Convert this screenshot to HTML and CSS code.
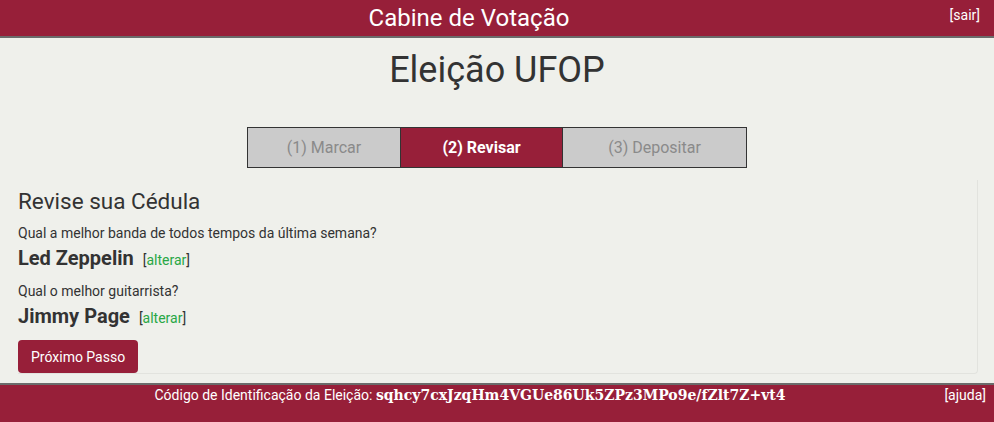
FILE: index.html
```html
<!DOCTYPE html>
<html lang="pt-BR">
<head>
<meta charset="utf-8">
<title>Cabine de Votação</title>
<link rel="stylesheet" href="styles.css">
</head>
<body>
<header class="topbar">
  <div class="topbar-title">Cabine de Votação</div>
  <a class="topbar-link" href="#">[sair]</a>
</header>
<main class="main">
  <h1 class="election-title">Eleição UFOP</h1>
  <div class="steps">
    <div class="step step-1">(1) Marcar</div>
    <div class="step step-2 active">(2) Revisar</div>
    <div class="step step-3">(3) Depositar</div>
  </div>
  <section class="panel">
    <h2 class="panel-title">Revise sua Cédula</h2>
    <div class="question">
      <div class="q-text">Qual a melhor banda de todos tempos da última semana?</div>
      <div class="q-answer"><span class="answer">Led Zeppelin</span><span class="alter">[<a href="#">alterar</a>]</span></div>
    </div>
    <div class="question">
      <div class="q-text">Qual o melhor guitarrista?</div>
      <div class="q-answer"><span class="answer">Jimmy Page</span><span class="alter">[<a href="#">alterar</a>]</span></div>
    </div>
    <button class="btn">Próximo Passo</button>
  </section>
</main>
<footer class="footer">
  <div class="footer-text">Código de Identificação da Eleição: <span class="code">sqhcy7cxJzqHm4VGUe86Uk5ZPz3MPo9e/fZlt7Z+vt4</span></div>
  <a class="footer-link" href="#">[ajuda]</a>
</footer>
</body>
</html>
```
FILE: styles.css
```css
* { box-sizing: border-box; }
html, body {
  margin: 0;
  padding: 0;
  height: 100%;
}
body {
  background: #eff0eb;
  font-family: Roboto, "Liberation Sans", sans-serif;
  color: #333;
  font-size: 14px;
  display: flex;
  flex-direction: column;
}
.topbar {
  position: relative;
  flex-shrink: 0;
  background: #971f39;
  height: 38px;
  border-bottom: 2px solid #6b6b6b;
  display: flex;
  justify-content: center;
  align-items: center;
  padding-right: 56px;
}
.topbar-title {
  color: #fff;
  font-size: 24px;
  line-height: 36px;
}
.topbar-link {
  position: absolute;
  right: 14px;
  top: 7px;
  color: #fff;
  text-decoration: none;
  font-size: 14px;
}
.main {
  flex: 1;
  padding: 0 18px 8px 18px;
}
.election-title {
  margin: 9px 0 0 0;
  text-align: center;
  font-size: 36px;
  font-weight: 400;
  line-height: 46px;
}
.steps {
  display: flex;
  width: 500px;
  margin: 34px auto 0 auto;
  border: 1px solid #333;
  height: 41px;
}
.step {
  background: #cbcbcb;
  color: #8a8a8a;
  font-size: 16px;
  display: flex;
  align-items: center;
  justify-content: center;
}
.step-1 { width: 153px; border-right: 1px solid #333; }
.step-2 { width: 162px; border-right: 1px solid #333; }
.step-3 { flex: 1; }
.step.active {
  background: #971f39;
  color: #fff;
  font-weight: 700;
}
.panel {
  margin: 12px -2px 0 0;
  padding: 8px 0 0 0;
  border-bottom: 1px solid #e2e3de;
  border-right: 1px solid #e2e3de;
  border-radius: 0 0 4px 0;
}
.panel-title {
  margin: 0;
  font-size: 22.5px;
  font-weight: 400;
  line-height: 26px;
}
.question { margin-top: 10px; }
.q-text {
  font-size: 14px;
  line-height: 18px;
}
.q-answer {
  margin-top: 2px;
  line-height: 28px;
  height: 28px;
  display: flex;
  align-items: baseline;
}
.answer {
  font-size: 20px;
  font-weight: 700;
  margin-right: 9px;
}
.alter { font-size: 14px; }
.alter a { color: #28a745; text-decoration: none; }
.btn {
  display: block;
  margin-top: 10px;
  background: #971f39;
  color: #fff;
  border: none;
  border-radius: 4px;
  font-family: Roboto, "Liberation Sans", sans-serif;
  font-size: 14px;
  height: 33px;
  padding: 0 13px;
}
.footer {
  position: relative;
  flex-shrink: 0;
  background: #971f39;
  border-top: 2px solid #6b6b6b;
  height: 39px;
  display: flex;
  justify-content: center;
  padding-right: 54px;
}
.footer-text {
  color: #fff;
  font-size: 14px;
  line-height: 20px;
}
.code {
  font-family: "DejaVu Serif", serif;
  font-weight: 700;
  font-size: 14px;
}
.footer-link {
  position: absolute;
  right: 8px;
  top: 0;
  color: #fff;
  text-decoration: none;
  font-size: 14px;
  line-height: 20px;
}
```
